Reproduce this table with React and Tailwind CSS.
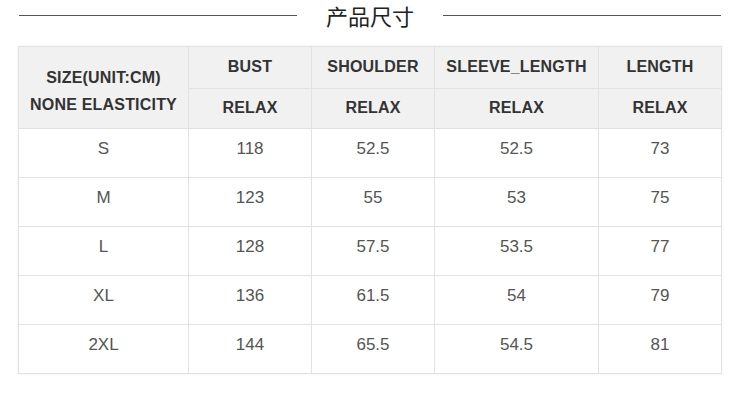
import React from 'react';

const rows = [
    ['S', '118', '52.5', '52.5', '73'],
    ['M', '123', '55', '53', '75'],
    ['L', '128', '57.5', '53.5', '77'],
    ['XL', '136', '61.5', '54', '79'],
    ['2XL', '144', '65.5', '54.5', '81'],
];

const headers = ['BUST', 'SHOULDER', 'SLEEVE_LENGTH', 'LENGTH'];

const App = () => {
    return (
        <div className="w-[756px] h-[407px] bg-white font-['Liberation_Sans',Arial,sans-serif] overflow-hidden pt-px">
            {/* title with rules */}
            <div className="flex items-center h-[28px] pl-[19px] pr-[35px]">
                <div className="h-px w-[278px] bg-[#555]" />
                <div className="flex-1 text-center text-[22px] leading-[28px] text-[#222] font-['Noto_Sans_CJK_SC',sans-serif]">
                    产品尺寸
                </div>
                <div className="h-px w-[278px] bg-[#555]" />
            </div>

            <table className="mt-[17px] ml-[18px] border-collapse table-fixed w-[703px] shadow-[0_0_2px_rgba(0,0,0,0.08)]">
                <colgroup>
                    <col className="w-[170px]" />
                    <col className="w-[123px]" />
                    <col className="w-[123px]" />
                    <col className="w-[164px]" />
                    <col className="w-[123px]" />
                </colgroup>
                <thead>
                    <tr className="h-[42px] bg-[#f1f1f1]">
                        <th rowSpan={2} className="border border-[#e2e2e2] text-[16px] font-bold text-[#333] leading-[27px] pt-[6px] text-center tracking-[0.2px]">
                            SIZE(UNIT:CM)<br />NONE ELASTICITY
                        </th>
                        {headers.map(h => (
                            <th key={h} className="border border-[#e2e2e2] text-[16px] font-bold text-[#333] text-center pb-[1px] tracking-[0.2px]">
                                {h}
                            </th>
                        ))}
                    </tr>
                    <tr className="h-[40px] bg-[#f1f1f1]">
                        {headers.map(h => (
                            <th key={h} className="border border-[#e2e2e2] text-[16px] font-bold text-[#333] text-center pb-[1px] tracking-[0.2px]">
                                RELAX
                            </th>
                        ))}
                    </tr>
                </thead>
                <tbody>
                    {rows.map(r => (
                        <tr key={r[0]} className="h-[49px]">
                            {r.map((v, i) => (
                                <td key={i} className="border border-[#e2e2e2] text-[17px] text-[#555] text-center pb-[8px]">
                                    {v}
                                </td>
                            ))}
                        </tr>
                    ))}
                </tbody>
            </table>
        </div>
    );
};

export default App;
